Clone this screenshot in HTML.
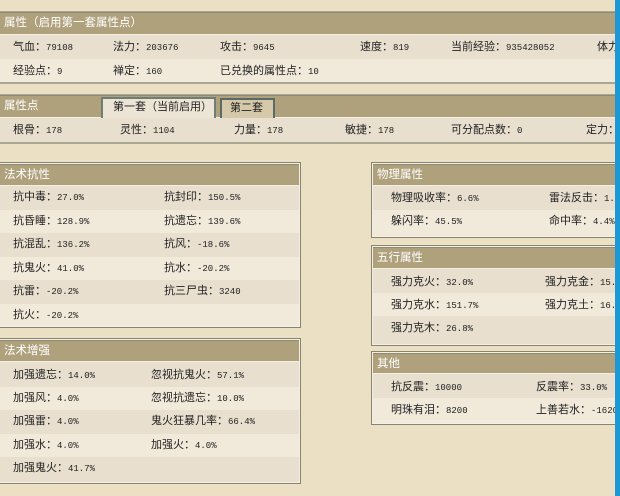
<!DOCTYPE html>
<html><head><meta charset="utf-8"><style>
*{margin:0;padding:0;box-sizing:border-box}
body{width:620px;height:496px;overflow:hidden;background:#ebdfc4;font-family:"Liberation Sans","Noto Sans CJK SC","WenQuanYi Zen Hei",sans-serif;font-size:11px;color:#222;position:relative}
.a{position:absolute;white-space:nowrap}
.hd{position:absolute;background:#b0a17d;color:#fff;font-size:11.5px;line-height:20px;padding-left:4px;border-top:1px solid #8d8a76;border-bottom:1px solid #f4efe2}
.ra{position:absolute;background:#e8dfcf}
.rb{position:absolute;background:#f1e9da}
.box{position:absolute;border:1px solid #878471;box-shadow:inset 0 0 0 1px #f4efe2,inset 0 0 0 2px #878471}
.t{position:absolute;white-space:nowrap;line-height:14px}
.n{font-family:"Liberation Mono","DejaVu Sans Mono",monospace;font-size:9px}
</style></head><body>
<div class="a" style="left:0;top:11px;width:620px;height:2px;background:#a9a792"></div>
<div class="hd" style="left:0;top:12px;width:620px;height:23px">属性（启用第一套属性点）</div>
<div class="ra" style="left:0;top:35px;width:620px;height:24px"></div>
<div class="rb" style="left:0;top:59px;width:620px;height:23px"></div>
<div class="a" style="left:0;top:82px;width:620px;height:2px;background:#a9a792"></div>
<div class="t" style="left:13px;top:40px">气血：<span class="n">79108</span></div>
<div class="t" style="left:113px;top:40px">法力：<span class="n">203676</span></div>
<div class="t" style="left:220px;top:40px">攻击：<span class="n">9645</span></div>
<div class="t" style="left:360px;top:40px">速度：<span class="n">819</span></div>
<div class="t" style="left:451px;top:40px">当前经验：<span class="n">935428052</span></div>
<div class="t" style="left:597px;top:40px">体力</div>
<div class="t" style="left:13px;top:64px">经验点：<span class="n">9</span></div>
<div class="t" style="left:113px;top:64px">禅定：<span class="n">160</span></div>
<div class="t" style="left:220px;top:64px">已兑换的属性点：<span class="n">10</span></div>

<div class="a" style="left:0;top:94px;width:620px;height:2px;background:#a9a792"></div>
<div class="hd" style="left:0;top:95px;width:620px;height:23px">属性点</div>
<div class="a" style="left:101px;top:97px;width:115px;height:21px;background:#ece4d4;border:2px solid #6f7d78;border-bottom:none;line-height:17px;padding-left:10px">第一套（当前启用）</div>
<div class="a" style="left:220px;top:98px;width:55px;height:20px;background:#d6c9a9;border:2px solid #5c6a66;border-bottom:none;line-height:16px;padding-left:8px">第二套</div>
<div class="ra" style="left:0;top:118px;width:620px;height:24px"></div>
<div class="a" style="left:0;top:142px;width:620px;height:2px;background:#a9a792"></div>
<div class="t" style="left:13px;top:123px">根骨：<span class="n">178</span></div>
<div class="t" style="left:120px;top:123px">灵性：<span class="n">1104</span></div>
<div class="t" style="left:234px;top:123px">力量：<span class="n">178</span></div>
<div class="t" style="left:345px;top:123px">敏捷：<span class="n">178</span></div>
<div class="t" style="left:451px;top:123px">可分配点数：<span class="n">0</span></div>
<div class="t" style="left:586px;top:123px">定力：</div>

<div class="box" style="left:-3px;top:162px;width:304px;height:166px"></div>
<div class="hd" style="left:0;top:164px;width:299px;height:22px">法术抗性</div>
<div class="ra" style="left:0;top:186px;width:299px;height:24px"></div>
<div class="rb" style="left:0;top:210px;width:299px;height:23px"></div>
<div class="ra" style="left:0;top:233px;width:299px;height:24px"></div>
<div class="rb" style="left:0;top:257px;width:299px;height:23px"></div>
<div class="ra" style="left:0;top:280px;width:299px;height:24px"></div>
<div class="rb" style="left:0;top:304px;width:299px;height:22px"></div>
<div class="t" style="left:13px;top:190px">抗中毒：<span class="n">27.0%</span></div>
<div class="t" style="left:164px;top:190px">抗封印：<span class="n">150.5%</span></div>
<div class="t" style="left:13px;top:214px">抗昏睡：<span class="n">128.9%</span></div>
<div class="t" style="left:164px;top:214px">抗遗忘：<span class="n">139.6%</span></div>
<div class="t" style="left:13px;top:237px">抗混乱：<span class="n">136.2%</span></div>
<div class="t" style="left:164px;top:237px">抗风：<span class="n">-18.6%</span></div>
<div class="t" style="left:13px;top:261px">抗鬼火：<span class="n">41.0%</span></div>
<div class="t" style="left:164px;top:261px">抗水：<span class="n">-20.2%</span></div>
<div class="t" style="left:13px;top:284px">抗雷：<span class="n">-20.2%</span></div>
<div class="t" style="left:164px;top:284px">抗三尸虫：<span class="n">3240</span></div>
<div class="t" style="left:13px;top:308px">抗火：<span class="n">-20.2%</span></div>

<div class="box" style="left:-3px;top:338px;width:304px;height:146px"></div>
<div class="hd" style="left:0;top:340px;width:299px;height:22px">法术增强</div>
<div class="ra" style="left:0;top:362px;width:299px;height:25px"></div>
<div class="rb" style="left:0;top:387px;width:299px;height:23px"></div>
<div class="ra" style="left:0;top:410px;width:299px;height:24px"></div>
<div class="rb" style="left:0;top:434px;width:299px;height:23px"></div>
<div class="ra" style="left:0;top:457px;width:299px;height:25px"></div>
<div class="t" style="left:13px;top:368px">加强遗忘：<span class="n">14.0%</span></div>
<div class="t" style="left:151px;top:368px">忽视抗鬼火：<span class="n">57.1%</span></div>
<div class="t" style="left:13px;top:391px">加强风：<span class="n">4.0%</span></div>
<div class="t" style="left:151px;top:391px">忽视抗遗忘：<span class="n">10.0%</span></div>
<div class="t" style="left:13px;top:414px">加强雷：<span class="n">4.0%</span></div>
<div class="t" style="left:151px;top:414px">鬼火狂暴几率：<span class="n">66.4%</span></div>
<div class="t" style="left:13px;top:438px">加强水：<span class="n">4.0%</span></div>
<div class="t" style="left:151px;top:438px">加强火：<span class="n">4.0%</span></div>
<div class="t" style="left:13px;top:461px">加强鬼火：<span class="n">41.7%</span></div>

<div class="box" style="left:371px;top:162px;width:260px;height:76px"></div>
<div class="hd" style="left:373px;top:164px;width:250px;height:22px">物理属性</div>
<div class="ra" style="left:373px;top:186px;width:250px;height:24px"></div>
<div class="rb" style="left:373px;top:210px;width:250px;height:26px"></div>
<div class="t" style="left:391px;top:191px">物理吸收率：<span class="n">6.6%</span></div>
<div class="t" style="left:549px;top:191px">雷法反击：<span class="n">1.6</span></div>
<div class="t" style="left:391px;top:214px">躲闪率：<span class="n">45.5%</span></div>
<div class="t" style="left:549px;top:214px">命中率：<span class="n">4.4%</span></div>

<div class="box" style="left:371px;top:245px;width:260px;height:101px"></div>
<div class="hd" style="left:373px;top:247px;width:250px;height:22px">五行属性</div>
<div class="ra" style="left:373px;top:269px;width:250px;height:24px"></div>
<div class="rb" style="left:373px;top:293px;width:250px;height:23px"></div>
<div class="ra" style="left:373px;top:316px;width:250px;height:28px"></div>
<div class="t" style="left:391px;top:275px">强力克火：<span class="n">32.0%</span></div>
<div class="t" style="left:545px;top:275px">强力克金：<span class="n">15.</span></div>
<div class="t" style="left:391px;top:298px">强力克水：<span class="n">151.7%</span></div>
<div class="t" style="left:545px;top:298px">强力克土：<span class="n">16.</span></div>
<div class="t" style="left:391px;top:321px">强力克木：<span class="n">26.8%</span></div>

<div class="box" style="left:371px;top:351px;width:260px;height:74px"></div>
<div class="hd" style="left:373px;top:353px;width:250px;height:21px">其他</div>
<div class="ra" style="left:373px;top:374px;width:250px;height:24px"></div>
<div class="rb" style="left:373px;top:398px;width:250px;height:25px"></div>
<div class="t" style="left:391px;top:380px">抗反震：<span class="n">10000</span></div>
<div class="t" style="left:536px;top:380px">反震率：<span class="n">33.0%</span></div>
<div class="t" style="left:391px;top:403px">明珠有泪：<span class="n">8200</span></div>
<div class="t" style="left:536px;top:403px">上善若水：<span class="n">-1620</span></div>

<div class="a" style="left:615px;top:0;width:5px;height:496px;background:#1d98d6"></div>
</body></html>
